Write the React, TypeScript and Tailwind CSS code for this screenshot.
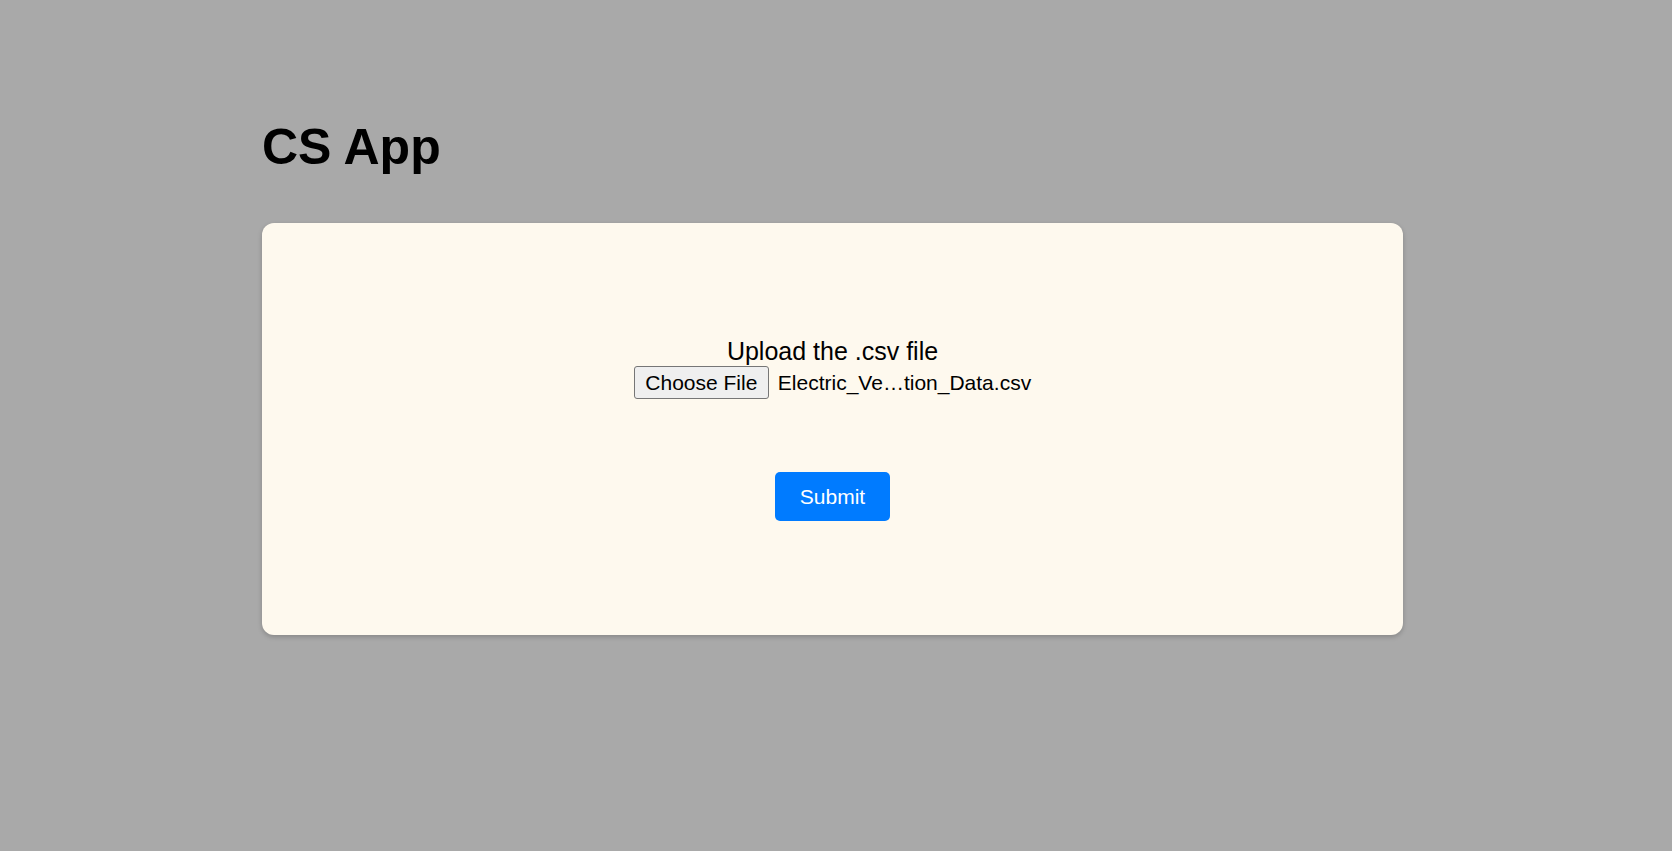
import React from "react";

const App = () => {
    return (
        <div className="min-h-screen bg-[#a9a9a9] font-['Liberation_Sans',Arial,sans-serif] text-black">
            <div className="w-[1141px] ml-[262px] pt-[122px]">
                <h1 className="text-[50px] font-bold leading-none">CS App</h1>

                <div className="mt-[51px] h-[412px] rounded-xl bg-[#fef9ee] shadow-[0_2px_5px_rgba(0,0,0,0.2)] flex flex-col items-center pt-[117px]">
                    <p className="text-[25px] leading-[23px]">Upload the .csv file</p>

                    <div className="mt-[3px] flex items-center gap-[9px]">
                        <span className="h-[33px] w-[135px] flex items-center justify-center border border-[#767676] bg-[#efefef] rounded-[3px] text-[21px] leading-normal">
                            Choose File
                        </span>
                        <span className="text-[21px] leading-normal">Electric_Ve…tion_Data.csv</span>
                    </div>

                    <button className="mt-[73px] h-[49px] w-[115px] rounded-[5px] bg-[#007bff] text-white text-[21px] leading-normal">
                        Submit
                    </button>
                </div>
            </div>
        </div>
    );
};

export default App;
